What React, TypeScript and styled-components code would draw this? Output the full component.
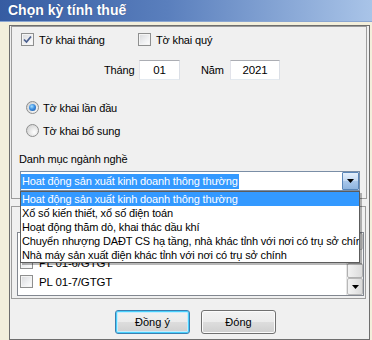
import React from 'react';
import styled, { createGlobalStyle, css } from 'styled-components';

const font = `"Liberation Sans", Arial, sans-serif`;

const GlobalStyle = createGlobalStyle`
  html, body {
    margin: 0;
    padding: 0;
    background: #f3efdc;
  }
  body {
    font-family: ${font};
    font-size: 11px;
    letter-spacing: -0.15px;
    color: #000;
    overflow: hidden;
  }
  * {
    box-sizing: border-box;
  }
`;

const Window = styled.div`
  width: 372px;
  height: 340px;
  display: flex;
  flex-direction: column;
  background: #f3efdc;
  overflow: hidden;
`;

const TitleBar = styled.div`
  height: 22px;
  flex: none;
  display: flex;
  align-items: center;
  padding: 0 0 1px 8px;
  background: linear-gradient(90deg, #365ca2 0%, #5a7fbd 45%, #a9c4e8 100%);
  border-bottom: 1px solid #8aa6d2;
  color: #fff;
  font: bold 14px ${font};
  letter-spacing: 0;
  text-shadow: 0 0 1px rgba(20, 40, 90, 0.5);
`;

const Body = styled.div`
  flex: 1;
  padding: 3px 0 0 9px;
`;

const Panel = styled.div`
  width: 361px;
  height: 315px;
  border: 1px solid #6e6e6e;
  background: #f0f0f0;
  padding-left: 1px;
`;

const Group = styled.div<{ $w: number; $top: number; $padTop: number; $padBottom: number }>`
  width: ${(p) => p.$w}px;
  margin-top: ${(p) => p.$top}px;
  padding: ${(p) => p.$padTop}px 0 ${(p) => p.$padBottom}px 1px;
  border: 1px solid #9c9c9c;
  display: flex;
  flex-direction: column;
`;

const Row = styled.div<{ $top: number; $left: number; $h?: number }>`
  display: flex;
  align-items: center;
  height: ${(p) => p.$h ?? 13}px;
  margin-top: ${(p) => p.$top}px;
  padding-left: ${(p) => p.$left}px;
  white-space: nowrap;
`;

const Item = styled.label<{ $w?: number }>`
  display: flex;
  align-items: center;
  gap: 5px;
  width: ${(p) => (p.$w ? `${p.$w}px` : 'auto')};
`;

const Box = styled.span`
  width: 13px;
  height: 13px;
  flex: none;
  display: inline-flex;
  align-items: center;
  justify-content: center;
  border: 1px solid #8e8f8f;
  background: linear-gradient(135deg, #d8d9db 0%, #eeeff1 55%, #ffffff 100%);
  box-shadow: inset 0 0 0 1px #f4f4f4;
`;

const Circle = styled.span<{ $on?: boolean }>`
  width: 13px;
  height: 13px;
  flex: none;
  border-radius: 50%;
  border: 1px solid #8e8f8f;
  background: radial-gradient(circle at 65% 65%, #ffffff 0%, #e6e6e6 45%, #c9c9c9 100%);
  display: inline-flex;
  align-items: center;
  justify-content: center;
  &::after {
    content: '';
    width: 7px;
    height: 7px;
    border-radius: 50%;
    background: radial-gradient(circle at 40% 35%, #a6e1ff 0%, #3d8ee0 45%, #174f9c 100%);
    display: ${(p) => (p.$on ? 'block' : 'none')};
  }
`;

const RadioItem = styled.label`
  display: flex;
  align-items: center;
  gap: 4px;
`;

const FieldLabel = styled.span<{ $w: number; $left?: number }>`
  width: ${(p) => p.$w}px;
  margin-left: ${(p) => p.$left ?? 0}px;
`;

const TextBox = styled.div<{ $w: number }>`
  width: ${(p) => p.$w}px;
  height: 20px;
  background: #fff;
  border: 1px solid;
  border-color: #abadb3 #dbdfe6 #e3e9ef #e2e3ea;
  display: flex;
  align-items: center;
  justify-content: center;
  font-size: 11.5px;
`;

const Caption = styled.div`
  height: 13px;
  margin-top: 16px;
  padding-left: 6px;
  line-height: 13px;
`;

const ComboWrap = styled.div`
  position: relative;
  margin: 5px 0 0 7px;
  width: 340px;
`;

const ComboField = styled.div`
  height: 20px;
  border: 1px solid #7a8ea6;
  background: #fff;
  display: flex;
  align-items: center;
`;

const Selected = styled.span`
  background: #3399ff;
  color: #fff;
  padding: 0 1px;
  line-height: 15px;
  white-space: nowrap;
`;

const DropBtn = styled.span`
  margin-left: auto;
  width: 17px;
  height: 18px;
  border: 1px solid #5a86b8;
  border-radius: 1px;
  background: linear-gradient(#e4effb 0%, #c3d9f2 50%, #a9c7ea 51%, #8fb5df 100%);
  display: flex;
  align-items: center;
  justify-content: center;
`;

const DropList = styled.ul`
  position: absolute;
  top: 20px;
  left: 0;
  width: 340px;
  margin: 0;
  padding: 0;
  list-style: none;
  background: #fff;
  border: 1px solid #5c5c5c;
  box-shadow: 2px 2px 0 rgba(0, 0, 0, 0.28);
  z-index: 5;
`;

const DropItem = styled.li<{ $active?: boolean }>`
  height: 14px;
  line-height: 14px;
  padding-left: 1px;
  white-space: nowrap;
  overflow: hidden;
  ${(p) =>
    p.$active &&
    css`
      background: #3399ff;
      color: #fff;
    `}
`;

const CheckList = styled.div`
  margin: 0 0 0 4px;
  width: 347px;
  height: 64px;
  border: 1px solid #828790;
  background: #fff;
  display: flex;
`;

const ListRows = styled.div`
  flex: 1;
  padding: 1px 0 0 2px;
`;

const ListRow = styled.div`
  height: 19px;
  display: flex;
  align-items: center;
  gap: 6px;
  font-size: 11.5px;
`;

const ScrollBar = styled.div`
  width: 17px;
  display: flex;
  flex-direction: column;
  background: #f0f0f0;
  border-left: 1px solid #e6e6e6;
`;

const ScrollBtn = styled.span`
  height: 17px;
  flex: none;
  border: 1px solid #b8b8b8;
  border-radius: 2px;
  background: linear-gradient(90deg, #f3f3f3 0%, #e8e8e8 50%, #d9d9d9 100%);
  display: flex;
  align-items: center;
  justify-content: center;
`;

const Track = styled.div`
  flex: 1;
  display: flex;
  flex-direction: column;
  justify-content: flex-end;
`;

const Thumb = styled.span`
  height: 15px;
  border: 1px solid #b0b0b0;
  border-radius: 2px;
  background: linear-gradient(90deg, #f2f2f2, #dcdcdc);
`;

const ButtonRow = styled.div`
  display: flex;
  gap: 11px;
  margin-top: 11px;
  padding-left: 104px;
`;

const Btn = styled.button<{ $default?: boolean }>`
  width: 75px;
  height: 24px;
  padding: 0;
  border: 1px solid #707070;
  border-radius: 3px;
  background: linear-gradient(#f2f2f2 0%, #ebebeb 50%, #dddddd 51%, #cfcfcf 100%);
  box-shadow: inset 0 0 0 1px #fbfbfb;
  font: 11px ${font};
  color: #000;
  ${(p) =>
    p.$default &&
    css`
      border-color: #3c7fb1;
      box-shadow: inset 0 0 0 1px #48d0fc, inset 0 0 0 2px #c5ecfd;
    `}
`;

const Check = () => (
  <svg width="9" height="9" viewBox="0 0 9 9">
    <path d="M1 4.5 L3.5 7 L8 1.5" fill="none" stroke="#4a5f8e" strokeWidth="1.7" />
  </svg>
);

const Down = () => (
  <svg width="7" height="4" viewBox="0 0 7 4">
    <path d="M0 0 H7 L3.5 4 Z" fill="#000" />
  </svg>
);

const Up = () => (
  <svg width="7" height="4" viewBox="0 0 7 4">
    <path d="M0 4 H7 L3.5 0 Z" fill="#000" />
  </svg>
);

const sectors = [
  'Hoat động sản xuất kinh doanh thông thường',
  'Xổ số kiến thiết, xổ số điện toán',
  'Hoạt động thăm dò, khai thác dầu khí',
  'Chuyển nhượng DAĐT CS hạ tầng, nhà khác tỉnh với nơi có trụ sở chính',
  'Nhà máy sản xuất điện khác tỉnh với nơi có trụ sở chính'
];

const appendices = ['PL 01-5/GTGT', 'PL 01-6/GTGT', 'PL 01-7/GTGT'];

export default function App() {
  return (
    <Window>
      <GlobalStyle />
      <TitleBar>Chọn kỳ tính thuế</TitleBar>
      <Body>
        <Panel>
          <Group $w={356} $top={0} $padTop={0} $padBottom={7}>
            <Row $top={6} $left={8}>
              <Item $w={117}>
                <Box>
                  <Check />
                </Box>
                Tờ khai tháng
              </Item>
              <Item>
                <Box />
                Tờ khai quý
              </Item>
            </Row>
            <Row $top={14} $left={91} $h={20}>
              <FieldLabel $w={35}>Tháng</FieldLabel>
              <TextBox $w={41}>01</TextBox>
              <FieldLabel $w={29} $left={21}>
                Năm
              </FieldLabel>
              <TextBox $w={50}>2021</TextBox>
            </Row>
            <Row $top={21} $left={13}>
              <RadioItem>
                <Circle $on />
                Tờ khai lần đầu
              </RadioItem>
            </Row>
            <Row $top={10} $left={13}>
              <RadioItem>
                <Circle />
                Tờ khai bổ sung
              </RadioItem>
            </Row>
            <Caption>Danh mục ngành nghề</Caption>
            <ComboWrap>
              <ComboField>
                <Selected>{sectors[0]}</Selected>
                <DropBtn>
                  <Down />
                </DropBtn>
              </ComboField>
              <DropList>
                {sectors.map((s, i) => (
                  <DropItem key={s} $active={i === 0}>
                    {s}
                  </DropItem>
                ))}
              </DropList>
            </ComboWrap>
          </Group>
          <Group $w={355} $top={7} $padTop={25} $padBottom={2}>
            <CheckList>
              <ListRows>
                {appendices.map((a) => (
                  <ListRow key={a}>
                    <Box />
                    {a}
                  </ListRow>
                ))}
              </ListRows>
              <ScrollBar>
                <ScrollBtn>
                  <Up />
                </ScrollBtn>
                <Track>
                  <Thumb />
                </Track>
                <ScrollBtn>
                  <Down />
                </ScrollBtn>
              </ScrollBar>
            </CheckList>
          </Group>
          <ButtonRow>
            <Btn $default>Đồng ý</Btn>
            <Btn>
              Đón<u>g</u>
            </Btn>
          </ButtonRow>
        </Panel>
      </Body>
    </Window>
  );
}
